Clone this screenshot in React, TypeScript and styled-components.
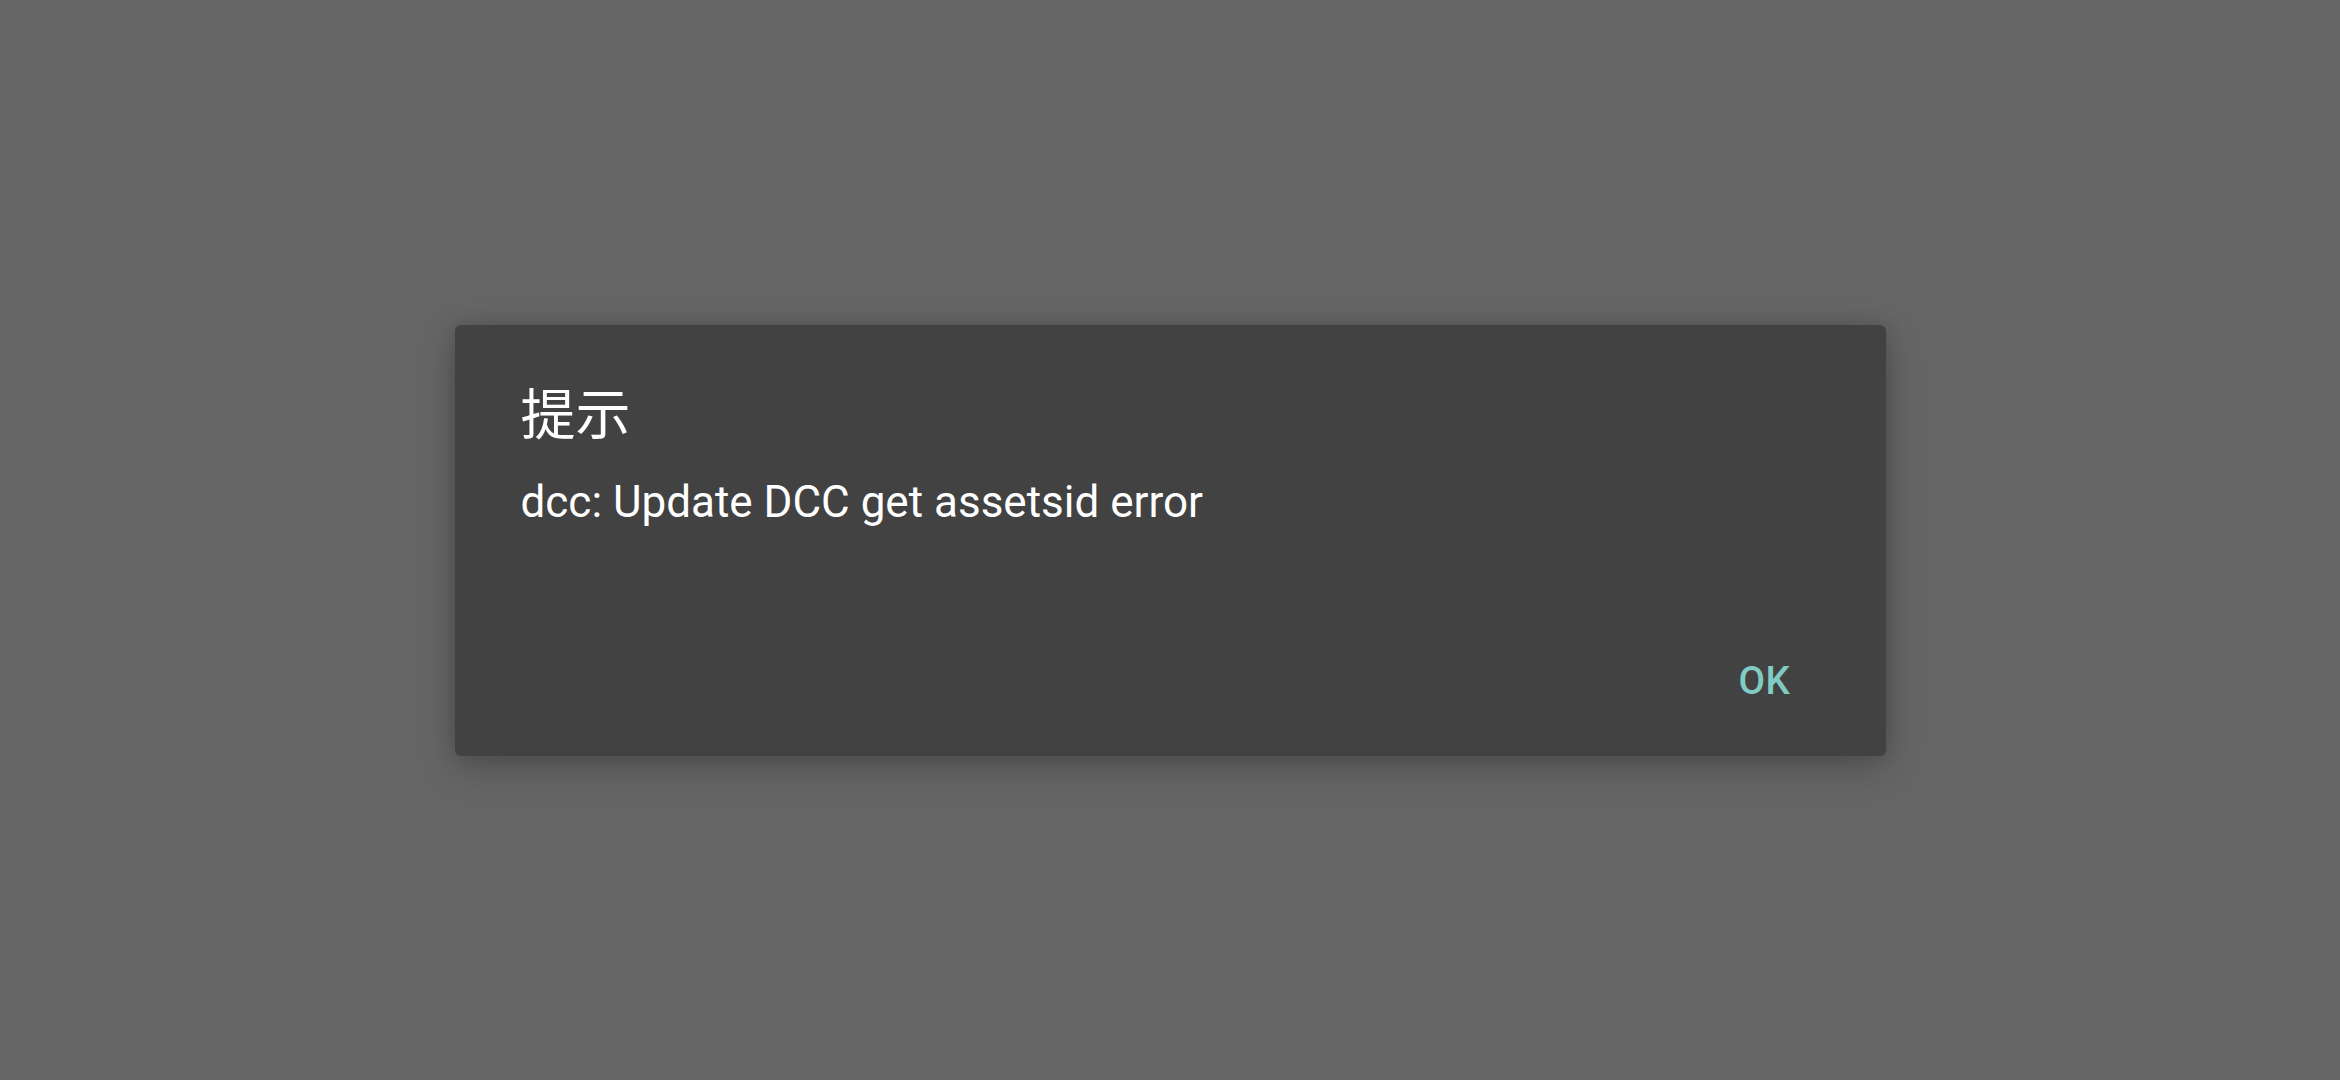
import React from "react";
import styled, { createGlobalStyle } from "styled-components";

const GlobalStyle = createGlobalStyle`
  html, body {
    margin: 0;
    padding: 0;
    width: 100%;
    height: 100%;
    overflow: hidden;
    background: #666666;
  }
  #root {
    width: 100%;
    height: 100%;
  }
`;

const Scrim = styled.div`
  width: 2340px;
  height: 1080px;
  background: #666666;
  display: flex;
  align-items: center;
  justify-content: center;
`;

const Dialog = styled.div`
  width: 1431px;
  height: 431px;
  box-sizing: border-box;
  background: #424242;
  border-radius: 6px;
  box-shadow: 0 12px 40px rgba(0, 0, 0, 0.22), 0 0 18px rgba(0, 0, 0, 0.14);
  display: flex;
  flex-direction: column;
  padding: 0;
`;

const Title = styled.h2`
  margin: 0;
  padding: 49px 66px 0;
  font-family: "Noto Sans CJK SC", "Roboto", sans-serif;
  font-weight: 400;
  font-size: 55px;
  line-height: 72px;
  color: #ffffff;
`;

const Message = styled.p`
  margin: 30px 0 0;
  padding: 0 66px;
  font-family: "Roboto", "Noto Sans CJK SC", sans-serif;
  font-weight: 400;
  font-size: 44px;
  line-height: 52px;
  color: #ffffff;
`;

const ButtonBar = styled.div`
  margin-top: auto;
  display: flex;
  justify-content: flex-end;
  padding: 0 33px 9px;
`;

const TextButton = styled.button`
  min-width: 176px;
  height: 132px;
  padding: 0 22px;
  border: none;
  background: transparent;
  font-family: "Roboto", sans-serif;
  font-weight: 500;
  font-size: 38.5px;
  letter-spacing: 0.5px;
  color: #80cbc4;
  text-transform: uppercase;
  cursor: pointer;
`;

export default function App() {
  return (
    <>
      <GlobalStyle />
      <Scrim>
        <Dialog role="dialog">
          <Title>提示</Title>
          <Message>dcc: Update DCC get assetsid error</Message>
          <ButtonBar>
            <TextButton>OK</TextButton>
          </ButtonBar>
        </Dialog>
      </Scrim>
    </>
  );
}
